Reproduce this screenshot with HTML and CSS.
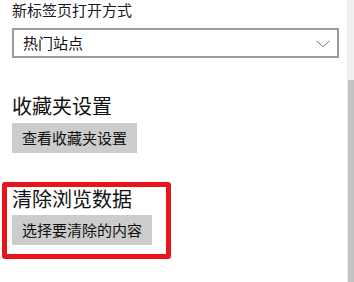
FILE: index.html
```html
<!DOCTYPE html>
<html lang="zh-CN">
<head>
<meta charset="utf-8">
<link rel="stylesheet" href="styles.css">
</head>
<body>
<div class="page">
  <main class="content">
    <div class="label">新标签页打开方式</div>
    <div class="select">
      <span class="select-text">热门站点</span>
      <svg class="chevron" width="14" height="8" viewBox="0 0 14 8"><polyline points="0.5,0.8 7,6.8 13.5,0.8" fill="none" stroke="#7a7a7a" stroke-width="1"/></svg>
    </div>
    <h2 class="heading first">收藏夹设置</h2>
    <button class="btn first-btn">查看收藏夹设置</button>
    <section class="highlight">
      <h2 class="heading">清除浏览数据</h2>
      <button class="btn">选择要清除的内容</button>
    </section>
  </main>
  <div class="scrollbar"><div class="thumb"></div></div>
</div>
</body>
</html>
```

FILE: styles.css
```css
html, body {
  margin: 0;
  padding: 0;
  background: #fff;
}
body {
  width: 354px;
  height: 282px;
  overflow: hidden;
  font-family: "Noto Sans CJK SC", "Noto Sans", sans-serif;
  color: #111;
}
.page {
  display: flex;
  height: 282px;
}
.content {
  flex: 1;
  padding: 0 8px 0 12px;
  display: flex;
  flex-direction: column;
  align-items: flex-start;
}
.label {
  font-size: 15px;
  line-height: 20px;
  color: #1a1a1a;
}
.select {
  margin-top: 8px;
  box-sizing: border-box;
  width: 100%;
  height: 30px;
  border: 2px solid #9c9c9c;
  display: flex;
  align-items: center;
  justify-content: space-between;
  padding: 0 7px 0 9px;
}
.select-text {
  font-size: 15px;
  line-height: 20px;
}
.chevron {
  display: block;
  margin-top: 1px;
}
.heading {
  margin: 0;
  font-weight: normal;
  font-size: 20px;
  line-height: 24px;
  color: #111;
}
.heading.first {
  margin-top: 36px;
}
.btn {
  margin: 4px 0 0 0;
  border: 0;
  background: #cccccc;
  height: 30px;
  padding: 0 10px;
  font-family: inherit;
  font-size: 15px;
  line-height: 30px;
  color: #111;
}
.first-btn {
  margin-top: 5px;
}
.highlight {
  margin: 29px 0 0 -10px;
  box-sizing: border-box;
  width: 169px;
  border: 5px solid #e8141a;
  border-radius: 3px;
  padding: 0 0 9px 5px;
}
.scrollbar {
  width: 7px;
  background: #f0f0f0;
  display: flex;
  flex-direction: column;
  align-items: flex-end;
}
.thumb {
  margin-top: 80px;
  width: 6px;
  flex: 1;
  background: #c2c2c2;
}
```
